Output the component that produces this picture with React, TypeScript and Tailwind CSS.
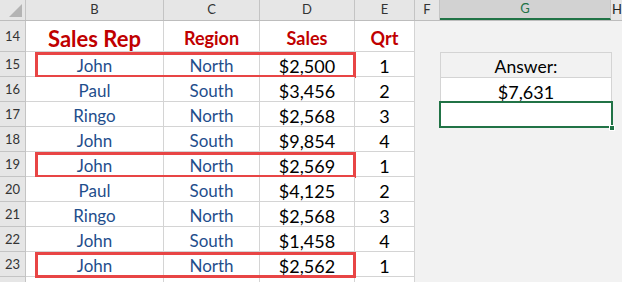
const rows = [
  { n: 15, rep: "John", region: "North", sales: "$2,500", q: "1", hit: true },
  { n: 16, rep: "Paul", region: "South", sales: "$3,456", q: "2" },
  { n: 17, rep: "Ringo", region: "North", sales: "$2,568", q: "3" },
  { n: 18, rep: "John", region: "South", sales: "$9,854", q: "4" },
  { n: 19, rep: "John", region: "North", sales: "$2,569", q: "1", hit: true },
  { n: 20, rep: "Paul", region: "South", sales: "$4,125", q: "2" },
  { n: 21, rep: "Ringo", region: "North", sales: "$2,568", q: "3" },
  { n: 22, rep: "John", region: "South", sales: "$1,458", q: "4" },
  { n: 23, rep: "John", region: "North", sales: "$2,562", q: "1", hit: true },
];

const cell = "flex items-center justify-center pt-[4px] border-r border-b border-[#d4d4d4] bg-white";
const rowHead = "w-[26px] shrink-0 flex items-center justify-center pt-[2px] border-r border-b border-[#c4c4c4] bg-[#e6e6e6] text-[13px] text-[#333]";

function GCell({ n }: { n: number }) {
  if (n === 15)
    return (
      <div className="w-[172px] shrink-0 flex items-center justify-center pt-[4px] border border-[#d4d4d4] border-b-0 bg-[#f2f2f2] text-[17.5px] text-black">
        Answer:
      </div>
    );
  if (n === 16)
    return (
      <div className="w-[172px] shrink-0 flex items-center justify-center pt-[4px] border-x border-t border-[#d4d4d4] bg-white text-[18px] text-black">
        $7,631
      </div>
    );
  if (n === 17)
    return (
      <div className="relative w-[172px] shrink-0 bg-white">
        <div className="absolute -left-[1px] -top-[1px] -right-[1px] -bottom-[1px] border-2 border-[#217346]" />
        <div className="absolute -right-[3px] -bottom-[4px] w-[6px] h-[6px] bg-[#217346] border border-white" />
      </div>
    );
  return <div className="w-[172px] shrink-0" />;
}

export default function App() {
  return (
    <div className="w-[622px] h-[282px] overflow-hidden bg-[#f2f2f2] font-['Lato','Liberation_Sans',sans-serif]">
      {/* column headers */}
      <div className="flex h-[21px] bg-[#e6e6e6] border-b border-[#bdbdbd] text-[13px] text-[#333]">
        <div className="relative w-[26px] shrink-0 border-r border-[#c4c4c4]">
          <div className="absolute right-[3px] bottom-[3px] w-0 h-0 border-l-[13px] border-l-transparent border-b-[13px] border-b-[#b4b4b4]" />
        </div>
        <div className="w-[138px] shrink-0 flex items-center justify-center border-r border-[#c4c4c4]">B</div>
        <div className="w-[96px] shrink-0 flex items-center justify-center border-r border-[#c4c4c4]">C</div>
        <div className="w-[95px] shrink-0 flex items-center justify-center border-r border-[#c4c4c4]">D</div>
        <div className="w-[60px] shrink-0 flex items-center justify-center border-r border-[#c4c4c4]">E</div>
        <div className="w-[25px] shrink-0 flex items-center justify-center border-r border-[#c4c4c4]">F</div>
        <div className="w-[171px] shrink-0 flex items-center justify-center bg-[#d2d2d2] border-r border-[#c4c4c4] border-b-2 border-b-[#217346] text-[#217346]">G</div>
        <div className="flex-1 flex items-center pl-[1px] text-[#222]">H</div>
      </div>

      {/* row 14 */}
      <div className="flex h-[31px]">
        <div className={rowHead}>14</div>
        <div className={`${cell} w-[138px] text-[22px] font-bold text-[#c00000]`}>Sales Rep</div>
        <div className={`${cell} w-[96px] text-[18px] font-bold text-[#c00000]`}>Region</div>
        <div className={`${cell} w-[95px] text-[18px] font-bold text-[#c00000]`}>Sales</div>
        <div className={`${cell} w-[60px] text-[18px] font-bold text-[#c00000]`}>Qrt</div>
        <div className="w-[25px] shrink-0" />
        <div className="w-[172px] shrink-0" />
      </div>

      {rows.map((r) => (
        <div key={r.n} className="flex h-[25px]">
          <div className={rowHead}>{r.n}</div>
          <div className="relative flex shrink-0">
            <div className={`${cell} w-[138px] text-[17px] text-[#1f4e8c]`}>{r.rep}</div>
            <div className={`${cell} w-[96px] text-[17px] text-[#1f4e8c]`}>{r.region}</div>
            <div className={`${cell} w-[95px] text-[18px] text-black`}>{r.sales}</div>
            {r.hit && (
              <div className="absolute left-[9px] -right-[1px] top-0 -bottom-[1px] border-[3px] border-[#e84545]" />
            )}
          </div>
          <div className={`${cell} w-[60px] text-[18px] text-black`}>{r.q}</div>
          <div className="w-[25px] shrink-0" />
          <GCell n={r.n} />
        </div>
      ))}

      {/* row 24 partial */}
      <div className="flex h-[25px]">
        <div className={rowHead} />
        <div className={`${cell} w-[138px]`} />
        <div className={`${cell} w-[96px]`} />
        <div className={`${cell} w-[95px]`} />
        <div className={`${cell} w-[60px]`} />
      </div>
    </div>
  );
}
